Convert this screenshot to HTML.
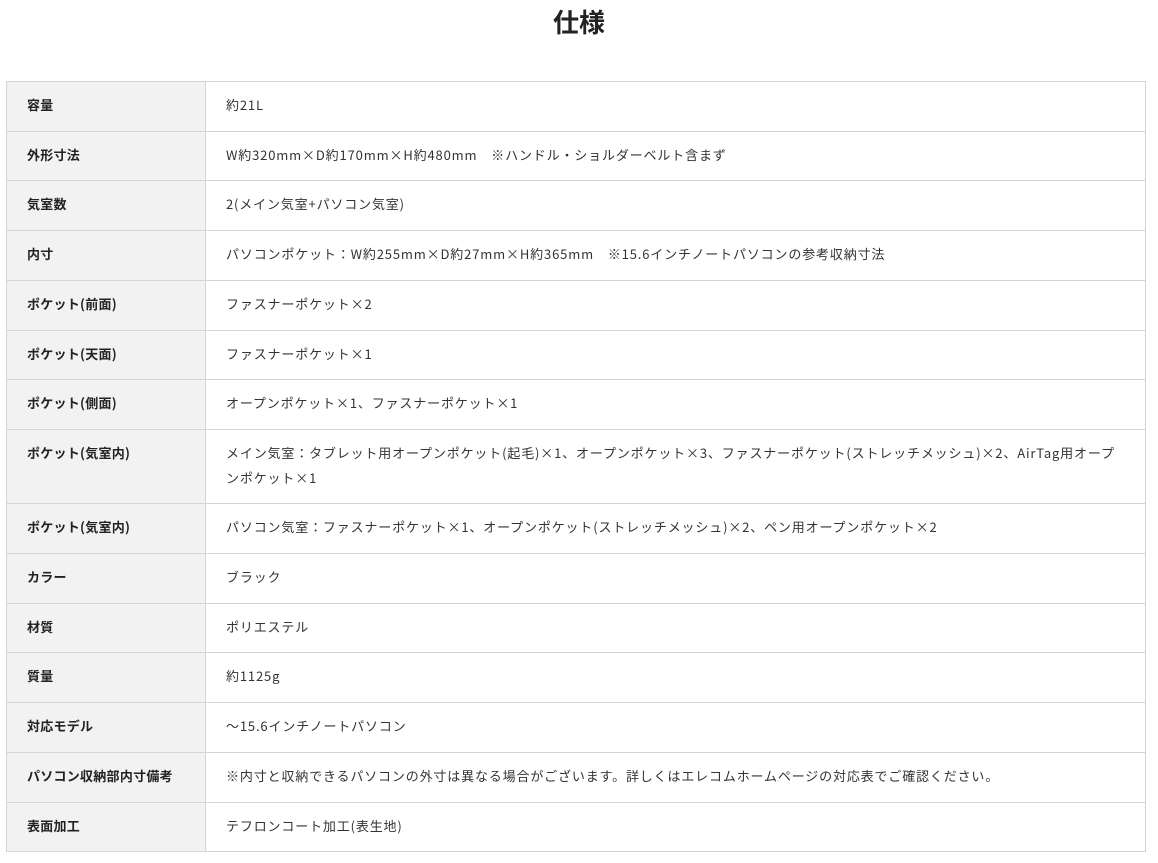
<!DOCTYPE html>
<html><head><meta charset="utf-8"><style>
body{margin:0;background:#fff;font-family:"Noto Sans CJK JP","Liberation Sans",sans-serif;color:#333;}
h2{margin:0;position:absolute;top:3px;left:0;width:1158px;text-align:center;font-size:26px;line-height:38px;font-weight:bold;color:#222;}
table{position:absolute;top:81px;left:6px;width:1140px;border-collapse:collapse;font-size:13px;letter-spacing:0.065em;}
td{border:1px solid #d4d4d4;padding:11px 20px 13px 20px;line-height:24.7px;vertical-align:top;}
td.l{width:158px;background:#f2f2f2;font-weight:bold;color:#222;letter-spacing:0.02em;}
</style></head><body>
<h2>仕様</h2>
<table>
<tr><td class="l">容量</td><td>約21L</td></tr>
<tr><td class="l">外形寸法</td><td>W約320mm×D約170mm×H約480mm　※ハンドル・ショルダーベルト含まず</td></tr>
<tr><td class="l">気室数</td><td>2(メイン気室+パソコン気室)</td></tr>
<tr><td class="l">内寸</td><td>パソコンポケット：W約255mm×D約27mm×H約365mm　※15.6インチノートパソコンの参考収納寸法</td></tr>
<tr><td class="l">ポケット(前面)</td><td>ファスナーポケット×2</td></tr>
<tr><td class="l">ポケット(天面)</td><td>ファスナーポケット×1</td></tr>
<tr><td class="l">ポケット(側面)</td><td>オープンポケット×1、ファスナーポケット×1</td></tr>
<tr><td class="l">ポケット(気室内)</td><td>メイン気室：タブレット用オープンポケット(起毛)×1、オープンポケット×3、ファスナーポケット(ストレッチメッシュ)×2、AirTag用オープ<br>ンポケット×1</td></tr>
<tr><td class="l">ポケット(気室内)</td><td>パソコン気室：ファスナーポケット×1、オープンポケット(ストレッチメッシュ)×2、ペン用オープンポケット×2</td></tr>
<tr><td class="l">カラー</td><td>ブラック</td></tr>
<tr><td class="l">材質</td><td>ポリエステル</td></tr>
<tr><td class="l">質量</td><td>約1125g</td></tr>
<tr><td class="l">対応モデル</td><td>～15.6インチノートパソコン</td></tr>
<tr><td class="l">パソコン収納部内寸備考</td><td>※内寸と収納できるパソコンの外寸は異なる場合がございます。詳しくはエレコムホームページの対応表でご確認ください。</td></tr>
<tr><td class="l">表面加工</td><td>テフロンコート加工(表生地)</td></tr>
</table>
</body></html>
